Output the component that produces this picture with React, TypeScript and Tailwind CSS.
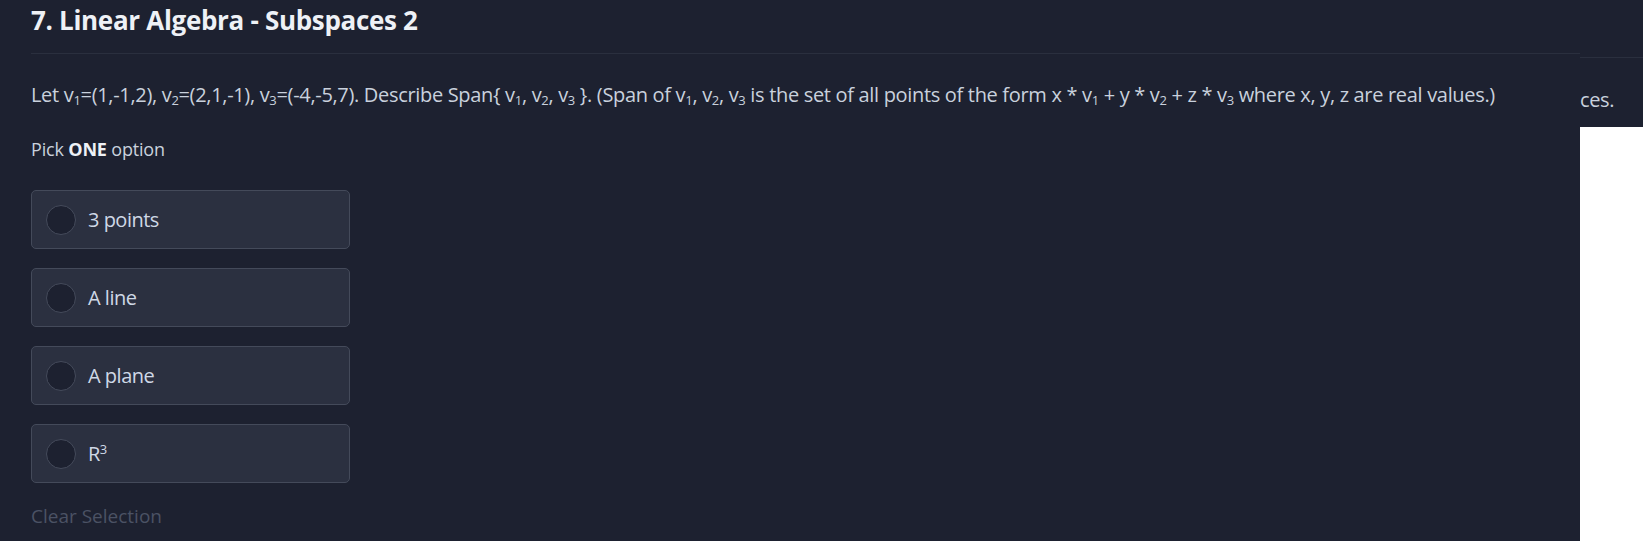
import React from "react";

const options = [
    { id: "a", label: <>3 points</> },
    { id: "b", label: <>A line</> },
    { id: "c", label: <>A plane</> },
    { id: "d", label: <>R<sup className="text-[13px] relative -top-[7px]">3</sup></> },
];

const V = ({ n }: { n: number }) => (
    <>v<sub className="text-[13px]">{n}</sub></>
);

export default function App() {
    return (
        <div className="flex w-[1643px] h-[541px] bg-[#1d2130] overflow-hidden" style={{ fontFamily: '"Open Sans", sans-serif' }}>
            <div className="w-[1580px] shrink-0 pl-[31px] pt-[3px]">
                <h1 className="text-[26px] leading-[34px] font-bold text-[#eef1f6] tracking-[-0.012em]">7. Linear Algebra - Subspaces 2</h1>
                <div className="mt-[16px] h-px bg-[#2a2f3e]" />
                <p className="mt-[27px] text-[20px] leading-[27px] text-[#c9d1dd] tracking-[-0.016em] whitespace-nowrap">
                    Let <V n={1} />=(1,-1,2), <V n={2} />=(2,1,-1), <V n={3} />=(-4,-5,7). Describe Span{"{"} <V n={1} />, <V n={2} />, <V n={3} /> {"}"}. (Span of <V n={1} />, <V n={2} />, <V n={3} /> is the set of all points of the form x * <V n={1} /> + y * <V n={2} /> + z * <V n={3} /> where x, y, z are real values.)
                </p>
                <div className="mt-[29px] text-[18px] leading-[24px] text-[#c9d1dd] tracking-[-0.01em]">
                    Pick <span className="font-bold text-[#eef1f6]">ONE</span> option
                </div>
                <div className="mt-[29px] flex flex-col gap-[19px]">
                    {options.map((o) => (
                        <label key={o.id} className="w-[319px] h-[59px] flex items-center gap-[12px] pl-[14px] rounded-[5px] border-[1.5px] border-[#444a5a] bg-[#2b3040]">
                            <span className="w-[30px] h-[30px] rounded-full border-[1.5px] border-[#454b5b] bg-[#1d2130]" />
                            <span className="text-[20px] leading-[27px] text-[#cfd8e6] tracking-[-0.025em]">{o.label}</span>
                        </label>
                    ))}
                </div>
                <div className="mt-[20px] text-[19px] leading-[26px] text-[#4b5264]">Clear Selection</div>
            </div>
            <div className="flex-1 flex flex-col">
                <div className="h-[58px] border-b border-[#2a2f3e]" />
                <div className="h-[69px] pt-[28px] text-[20px] leading-[27px] text-[#c9d1dd] tracking-[-0.02em]">ces.</div>
                <div className="flex-1 bg-white" />
            </div>
        </div>
    );
}
